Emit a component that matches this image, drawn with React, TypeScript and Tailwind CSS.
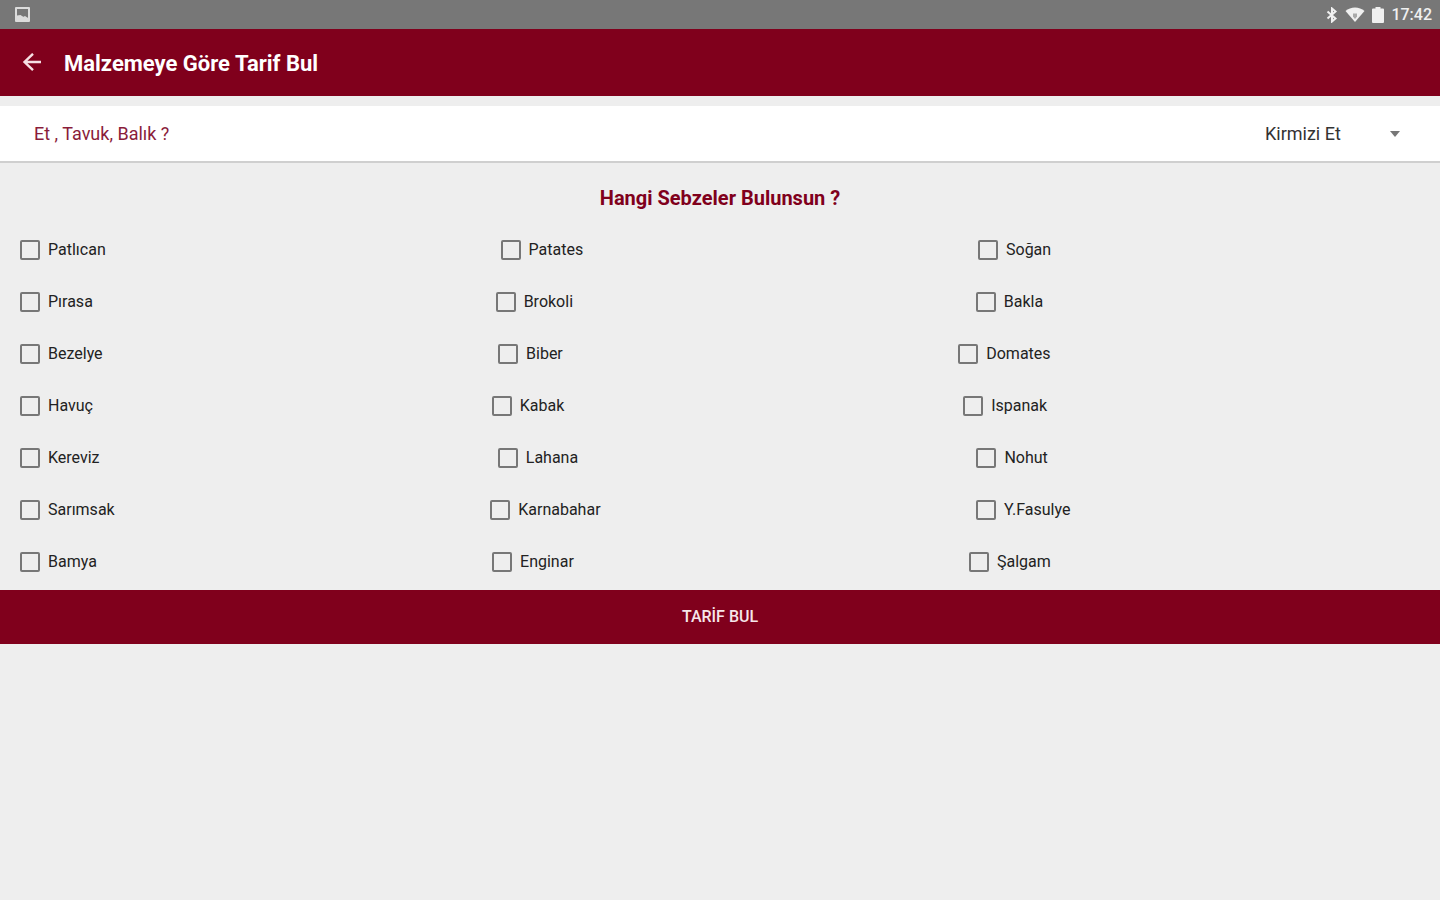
import { useState } from "react"

const rows = [
  ["Patlıcan", "Patates", "Soğan"],
  ["Pırasa", "Brokoli", "Bakla"],
  ["Bezelye", "Biber", "Domates"],
  ["Havuç", "Kabak", "Ispanak"],
  ["Kereviz", "Lahana", "Nohut"],
  ["Sarımsak", "Karnabahar", "Y.Fasulye"],
  ["Bamya", "Enginar", "Şalgam"],
]

function StatusBar() {
  return (
    <div className="flex h-[29px] items-center justify-between bg-[#777777] pl-[15px] pr-2 text-[#f0f0f0]">
      <svg width="15" height="15" viewBox="0 0 15 15" className="text-[#dcdcdc]">
        <path
          fill="currentColor"
          fillRule="evenodd"
          d="M1 0h13a1 1 0 0 1 1 1v13a1 1 0 0 1-1 1H1a1 1 0 0 1-1-1V1a1 1 0 0 1 1-1zM2 2v9l3-2 3 1 2-1 3 2V2z"
        />
        <path fill="currentColor" d="M2 8.500 5.500 8l3 2 4.500 1v2H2z" />
      </svg>
      <div className="flex items-center">
        <svg width="12" height="16" viewBox="0 0 12 16" fill="none" stroke="currentColor" strokeWidth="2">
          <path d="M1.500 4.500l8 7L6 14.500v-13l3.500 3-8 7" />
        </svg>
        <svg width="20" height="15" viewBox="0 0 20 15" className="ml-[7px]">
          <path fill="currentColor" d="M.5 4C5.500-.7 14.500-.7 19.500 4L10 15z" />
          <path fill="#aaaaaa" d="M8 6.500h4v3L10 12l-2-2.500z" />
        </svg>
        <svg width="12" height="16" viewBox="0 0 12 16" className="ml-[7px]">
          <path fill="currentColor" d="M3.500 0h5v1.500H11a1 1 0 0 1 1 1V15a1 1 0 0 1-1 1H1a1 1 0 0 1-1-1V2.500a1 1 0 0 1 1-1h2.500z" />
        </svg>
        <span className="ml-[7px] text-base font-medium leading-none">17:42</span>
      </div>
    </div>
  )
}

export default function App() {
  const [selected, setSelected] = useState<string[]>([])
  const [meat, setMeat] = useState("Kirmizi Et")

  function toggle(name: string) {
    setSelected((prev) => (prev.includes(name) ? prev.filter((n) => n !== name) : [...prev, name]))
  }

  return (
    <div className="min-h-screen bg-[#eeeeee] font-[Roboto,sans-serif] text-[#222222]">
      <StatusBar />

      <header className="flex h-[67px] items-center bg-[#80001c] pl-[22px] text-white">
        <button type="button" aria-label="Geri" className="flex">
          <svg width="20" height="20" viewBox="0 0 20 20" fill="none" stroke="#f6dfe3" strokeWidth="2.400">
            <path d="M19 9H2.500M11 .8L2.500 9l8.500 8.200" />
          </svg>
        </button>
        <h1 className="ml-[22px] pt-[2px] text-[22px] font-bold leading-7">Malzemeye Göre Tarif Bul</h1>
      </header>

      <main>
        {/* Meat type */}
        <div className="mt-[10px] flex h-[57px] items-center justify-between border-b-2 border-[#cfcfcf] bg-white pl-[34px] pr-6">
          <label htmlFor="meat" className="text-lg text-[#8a1c3a]">
            Et , Tavuk, Balık ?
          </label>
          <div className="relative flex items-center">
            <select
              id="meat"
              value={meat}
              onChange={(e) => setMeat(e.target.value)}
              className="w-[151px] appearance-none bg-transparent text-lg text-[#333333]"
            >
              <option>Kirmizi Et</option>
              <option>Tavuk</option>
              <option>Balık</option>
            </select>
            <svg width="10" height="6" viewBox="0 0 10 6" className="pointer-events-none absolute right-4 text-[#777777]">
              <path fill="currentColor" d="M0 0h10L5 6z" />
            </svg>
          </div>
        </div>

        {/* Vegetables */}
        <h2 className="pb-3 pt-[21px] text-center text-[20px] font-bold leading-7 text-[#80001c]">
          Hangi Sebzeler Bulunsun ?
        </h2>
        <div className="px-[7px] pb-[2px]">
          {rows.map((row) => (
            <div key={row[0]} className="flex h-[52px] items-center">
              {row.map((name) => (
                <label key={name} className="flex flex-auto items-center gap-2 pl-[13px] text-base">
                  <input
                    type="checkbox"
                    checked={selected.includes(name)}
                    onChange={() => toggle(name)}
                    className="size-5 appearance-none rounded-xs border-2 border-[#777777] checked:bg-[#80001c]"
                  />
                  {name}
                </label>
              ))}
            </div>
          ))}
        </div>

        <button type="button" className="h-[54px] w-full bg-[#80001c] text-base font-medium text-[#f6e6ea]">
          TARİF BUL
        </button>
      </main>
    </div>
  )
}
